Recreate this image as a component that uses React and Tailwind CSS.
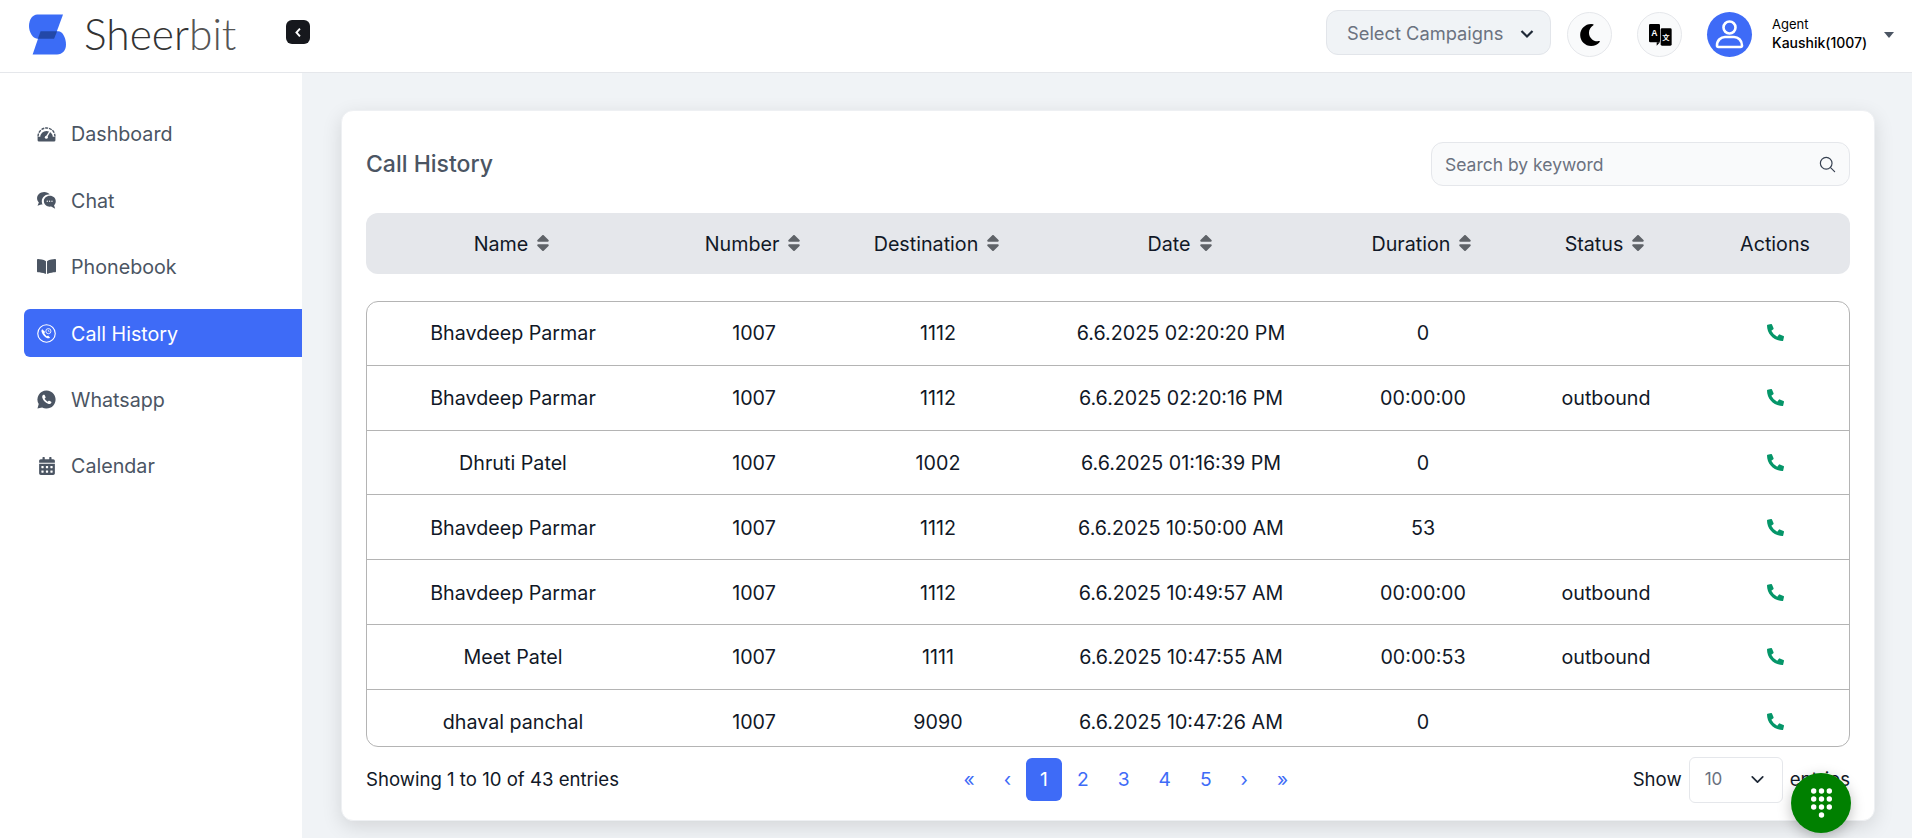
import React from "react";
import { FaBookOpen, FaCalendarAlt, FaPhoneAlt, FaMoon, FaSortUp, FaSortDown } from "react-icons/fa";
import { IoSearchOutline } from "react-icons/io5";
import { FiChevronDown } from "react-icons/fi";

const font = { fontFamily: "Inter, sans-serif" };

function GaugeIcon() {
  return (
    <svg viewBox="0 0 20 16" className="w-[19px] h-[15px]">
      <path d="M1 10a9 9 0 0 1 18 0" fill="none" stroke="#4b5563" strokeWidth="1.500" strokeDasharray="3.200 1" />
      <path d="M3.300 11a6.700 6.700 0 0 1 13.400 0z" fill="#4b5563" />
      <path d="M0.500 10.500h19v3.500a1.500 1.500 0 0 1-1.500 1.500H2a1.500 1.500 0 0 1-1.500-1.500z" fill="#4b5563" />
      <path d="M14 4 10 10.500" stroke="#fff" strokeWidth="1.500" fill="none" />
      <circle cx="9.800" cy="11" r="1.600" fill="#fff" />
    </svg>
  );
}
function ChatIcon() {
  return (
    <svg viewBox="0 0 20 18" className="w-[19px] h-[17px]" fill="#4b5563">
      <path d="M7.500 0c2.500 0 4.700 1 6 2.500C9 2.500 5 5.500 5 10c0 1.200.3 2.300.8 3.200l-1.500.1L0.500 14.500l1.400-3.300C.7 10 0 8.400 0 6.700 0 3 3.400 0 7.500 0z" />
      <path d="M13.500 4c3.600 0 6.300 2.500 6.300 5.800 0 1.700-.7 3.200-1.800 4.200l1.200 3.700-4.300-2.300c-.4.100-.9.100-1.400.1-3.500 0-6.300-2.500-6.300-5.700S10 4 13.500 4z" />
      <g fill="#fff"><circle cx="10.800" cy="9.800" r=".7" /><circle cx="13.300" cy="9.800" r=".7" /><circle cx="15.800" cy="9.800" r=".7" /></g>
    </svg>
  );
}
function WhatsappIcon() {
  return (
    <svg viewBox="0 0 20 20" className="w-[19px] h-[19px]">
      <path d="M10 .500a9.500 9.500 0 1 1-4.600 17.800L.500 19.500l1.300-4.700A9.500 9.500 0 0 1 10 .500z" fill="#4b5563" />
      <path d="M6.800 5c-1.300.7-1.600 2-1.100 3.500 1 2.800 3.200 5 5.900 5.900 1.500.5 2.900.1 3.500-1.100.2-.4.100-.8-.2-1l-1.900-1c-.4-.2-.7-.1-1 .2l-.7.8c-1.400-.6-2.700-1.900-3.300-3.300l.8-.7c.3-.3.4-.6.2-1L8 5.200C7.700 4.900 7.200 4.800 6.800 5z" fill="#fff" />
    </svg>
  );
}
function CallHistoryIcon() {
  return (
    <svg viewBox="0 0 20 20" className="w-[19px] h-[19px]" fill="none" stroke="#fff">
      <circle cx="10" cy="10" r="9.200" strokeWidth="1.200" />
      <circle cx="12" cy="7.500" r="2.700" strokeWidth=".9" />
      <path d="M12 6v1.700h1.300" strokeWidth=".7" />
      <path d="M5.500 5.500c-.8.800-1 1.800-.6 3 .9 2.700 3.300 5.600 6 6.400 1.200.3 2.200 0 2.800-.8l-2.100-1.900-1.100.6c-1.200-.6-2.400-2.100-2.800-3.400l.9-1.100z" fill="#fff" stroke="none" />
    </svg>
  );
}
function Logo() {
  return (
    <svg viewBox="27 17 112 121" className="w-[37px] h-[41px] shrink-0 mt-[14px]">
      <path d="M52 17H130L103 90H52C38 90 27 70 27 52C27 32 38 17 52 17Z" fill="#3b6cf6" />
      <path d="M62 68H115C130 68 139 90 139 108C139 126 128 138 112 138H38L62 68Z" fill="#3b6cf6" />
      <path d="M62 68H112L103 90H54Z" fill="#2348a8" />
    </svg>
  );
}
function TranslateIcon() {
  return (
    <svg viewBox="262 42 72 72" className="w-[24px] h-[24px]">
      <rect x="265" y="45" width="33" height="55" rx="4" fill="#000" />
      <path d="M288 100h10l-10 10z" fill="#000" />
      <rect x="300" y="58" width="33" height="52" rx="4" fill="#000" />
      <text x="281" y="81" fontSize="26" fill="#fff" textAnchor="middle" fontFamily="Liberation Sans, sans-serif" fontWeight="700">A</text>
      <text x="316" y="94" fontSize="22" fill="#fff" textAnchor="middle" fontFamily="Noto Sans CJK SC, sans-serif" fontWeight="700">文</text>
    </svg>
  );
}
function UserIcon() {
  return (
    <svg viewBox="0 0 45 45" className="w-[45px] h-[45px]" fill="none" stroke="#fff" strokeWidth="2.600">
      <circle cx="22.500" cy="15.500" r="6" />
      <path d="M10 33.500c0-5.500 4-8.500 8-8.500h9c4 0 8 3 8 8.500 0 1-.7 1.500-1.500 1.500h-22c-.8 0-1.500-.5-1.500-1.500z" />
    </svg>
  );
}
function DialIcon() {
  const cx = [2.700, 10.500, 18.300];
  return (
    <svg viewBox="0 0 21 30" className="w-[21px] h-[30px]" fill="#fff">
      {[3, 11, 19].map((y) => cx.map((x) => <circle key={x + "-" + y} cx={x} cy={y} r="2.700" />))}
      <circle cx="10.500" cy="27" r="2.700" />
    </svg>
  );
}
function Sort() {
  return (
    <span className="relative inline-block w-[12px] h-[18px] text-[#5f6368] shrink-0">
      <FaSortUp className="absolute inset-0 w-[12px] h-[18px] scale-[1.15]" />
      <FaSortDown className="absolute inset-0 w-[12px] h-[18px] scale-[1.15]" />
    </span>
  );
}

const nav = [
  ["Dashboard", <GaugeIcon />],
  ["Chat", <ChatIcon />],
  ["Phonebook", <FaBookOpen className="w-[19px] h-[19px]" />],
  ["Call History", <CallHistoryIcon />, true],
  ["Whatsapp", <WhatsappIcon />],
  ["Calendar", <FaCalendarAlt className="w-[18px] h-[18px]" />],
];
const cols = ["Name", "Number", "Destination", "Date", "Duration", "Status", "Actions"];
const rows = [
  ["Bhavdeep Parmar", "1007", "1112", "6.6.2025 02:20:20 PM", "0", ""],
  ["Bhavdeep Parmar", "1007", "1112", "6.6.2025 02:20:16 PM", "00:00:00", "outbound"],
  ["Dhruti Patel", "1007", "1002", "6.6.2025 01:16:39 PM", "0", ""],
  ["Bhavdeep Parmar", "1007", "1112", "6.6.2025 10:50:00 AM", "53", ""],
  ["Bhavdeep Parmar", "1007", "1112", "6.6.2025 10:49:57 AM", "00:00:00", "outbound"],
  ["Meet Patel", "1007", "1111", "6.6.2025 10:47:55 AM", "00:00:53", "outbound"],
  ["dhaval panchal", "1007", "9090", "6.6.2025 10:47:26 AM", "0", ""],
];
const grid = "grid grid-cols-[294px_188px_180px_306px_178px_188px_150px]";
const pages = ["«", "‹", "1", "2", "3", "4", "5", "›", "»"];

export default function App() {
  return (
    <div style={font} className="h-[838px] overflow-hidden flex flex-col bg-[#f0f3f6] text-[19.700px] text-[#111827]">
      <header className="h-[73px] shrink-0 bg-white border-b border-[#e5e7eb] flex items-start pl-[29px] pr-[18px]">
        <Logo />
        <span className="ml-[18px] mt-[13px] text-[42.500px] leading-[42px] text-[#333] font-light" style={{ fontFamily: "Lato, sans-serif" }}>
          Sheer<span className="text-[#555]">bit</span>
        </span>
        <button className="ml-[50px] mt-[20px] w-[24px] h-[24px] rounded-[6px] bg-[#16181d] flex items-center justify-center">
          <svg viewBox="0 0 10 14" className="w-[8px] h-[11px]" fill="none" stroke="#fff" strokeWidth="2.400"><path d="M7.500 2 3 7l4.500 5" /></svg>
        </button>
        <div className="ml-auto mt-[12px] flex items-center">
          <div className="-mt-[4px] w-[225px] h-[45px] rounded-[12px] border border-[#e2e5ea] bg-[#f0f3f6] flex items-center justify-between pt-[3px] pl-[20px] pr-[16px] text-[18.300px] text-[#6b7280]">
            <span>Select Campaigns</span>
            <svg viewBox="0 0 14 10" className="w-[14px] h-[10px]" fill="none" stroke="#1f2937" strokeWidth="2.200"><path d="M1.500 2 7 7.500 12.500 2" /></svg>
          </div>
          <div className="ml-[16px] w-[45px] h-[45px] rounded-full border border-[#e5e7eb] bg-[#f9fafb] flex items-center justify-center">
            <FaMoon className="w-[22px] h-[22px] text-black" />
          </div>
          <div className="ml-[25px] w-[45px] h-[45px] rounded-full border border-[#e5e7eb] bg-[#f9fafb] flex items-center justify-center">
            <TranslateIcon />
          </div>
          <div className="ml-[25px] w-[45px] h-[45px] rounded-full bg-[#3e6bf7]"><UserIcon /></div>
          <div className="ml-[20px] flex flex-col text-black w-[100px]">
            <span className="text-[13px] leading-[16px]">Agent</span>
            <span className="text-[14px] leading-[20px] font-medium mt-[1px]">Kaushik(1007)</span>
          </div>
          <span className="ml-[12px] w-0 h-0 border-x-[5px] border-x-transparent border-t-[6px] border-t-[#4b5563]" />
        </div>
      </header>
      <div className="flex flex-1 min-h-0">
        <aside className="w-[302px] shrink-0 bg-white pt-[37px] pl-[24px] flex flex-col gap-[18.400px]">
          {nav.map(([label, icon, active]) => (
            <div key={label} className={"h-[48px] flex items-center pl-[13px] rounded-l-[6px] " + (active ? "bg-[#3e6bf7] text-white" : "text-[#4b5563]")}>
              <span className="w-[19px] flex justify-center shrink-0">{icon}</span>
              <span className="ml-[15px] pt-[2.500px]">{label}</span>
            </div>
          ))}
        </aside>
        <main className="flex-1 min-w-0 pt-[37px] pl-[39px] pr-[37px]">
          <div className="h-[711px] bg-white rounded-[12px] shadow-[0_6px_20px_rgba(0,0,0,0.12)] border border-[#eef0f3] px-[24px] flex flex-col">
            <div className="flex items-center justify-between h-[44px] mt-[31px] shrink-0">
              <h1 className="text-[23px] font-medium text-[#4b5563] pt-[1px]">Call History</h1>
              <div className="w-[419px] h-[44px] rounded-[12px] border border-[#e5e7eb] bg-[#f9fafb] flex items-center justify-between pl-[13px] pr-[12px] text-[17.500px] text-[#6b7280]">
                <span className="pt-[2px]">Search by keyword</span>
                <IoSearchOutline className="w-[19px] h-[19px] text-[#374151]" />
              </div>
            </div>
            <div className={grid + " mt-[27px] h-[61px] shrink-0 items-center bg-[#e5e7eb] rounded-[12px] text-center"}>
              {cols.map((c, i) => (
                <div key={c} className={"flex items-center justify-center gap-[9px] " + (i < 6 ? "pr-[3px]" : "")}>
                  <span className="pt-[2.500px]">{c}</span>
                  {i < 6 && <Sort />}
                </div>
              ))}
            </div>
            <div className="mt-[27px] h-[446px] shrink-0 border border-[#b4b4b4] rounded-[12px] overflow-hidden">
              <div className="-mt-px">
                {rows.map((r, i) => (
                  <div key={i} className={grid + " -mx-px h-[64.800px] items-center text-center border-b border-[#b4b4b4]"}>
                    {r.map((v, j) => <div key={j} className="pt-[2.500px]">{v}</div>)}
                    <div className="flex justify-center"><FaPhoneAlt className="w-[17px] h-[17px] text-[#059669]" /></div>
                  </div>
                ))}
              </div>
            </div>
            <div className="flex items-center justify-between mt-[10px] h-[45px] shrink-0">
              <span className="text-[18.600px]">Showing 1 to 10 of 43 entries</span>
              <div className="flex items-center text-[#3e6bf7] text-[19.200px]">
                {pages.map((p, i) => (
                  <span key={i} className={"h-[43px] px-[14.500px] flex items-center rounded-[6px] " + (p === "1" ? "bg-[#3e6bf7] text-white" : "")}>{p}</span>
                ))}
              </div>
              <div className="flex items-center text-[18.600px]">
                <span>Show</span>
                <div className="ml-[7px] w-[94px] h-[46px] rounded-[6px] border border-[#e5e7eb] flex items-center justify-between pl-[15px] pr-[14px] text-[#6b7280]">
                  <span className="text-[17px]">10</span>
                  <FiChevronDown className="w-[21px] h-[21px] text-[#1f2937]" />
                </div>
                <span className="ml-[7px]">entries</span>
              </div>
            </div>
          </div>
        </main>
      </div>
      <button className="fixed right-[61px] bottom-[5px] w-[60px] h-[60px] rounded-full bg-[#008000] shadow-[0_4px_14px_rgba(0,0,0,0.25)] flex items-center justify-center">
        <DialIcon />
      </button>
    </div>
  );
}
